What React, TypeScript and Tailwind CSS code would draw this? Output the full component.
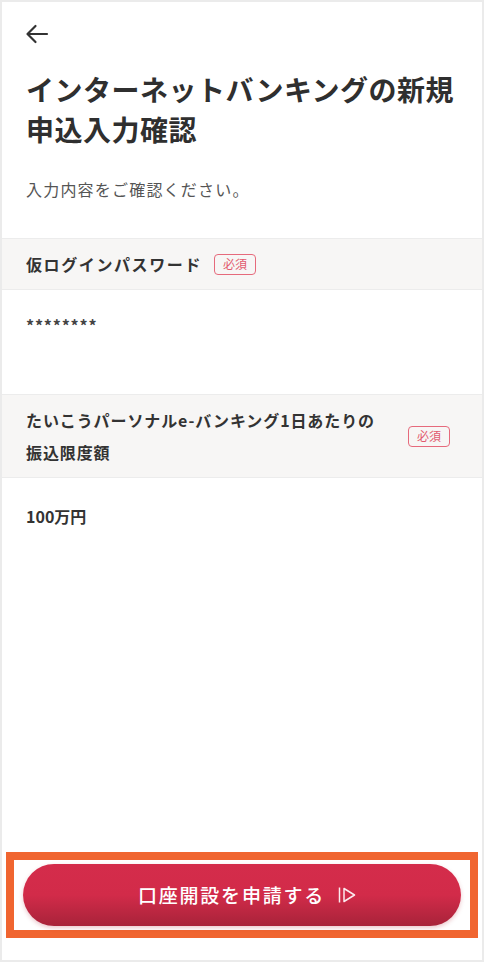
import React from "react";

const font = { fontFamily: '"Noto Sans CJK JP", "Noto Sans", sans-serif' };

function Badge() {
  return (
    <span className="inline-flex items-center justify-center h-[21px] w-[42px] rounded-[4px] border-[1.5px] border-[#e66a7c] text-[#e25a6e] text-[12px] leading-none shrink-0">
      必須
    </span>
  );
}

export default function App() {
  return (
    <div className="w-[484px] h-[962px] bg-[#ebebeb] p-[2px]" style={font}>
      <div className="w-full h-full bg-white flex flex-col text-[#333]">
        <div className="px-[22px] pt-[19px]">
          <svg width="26" height="26" viewBox="0 0 26 26" fill="none" stroke="#333" strokeWidth="2.2" strokeLinecap="round" strokeLinejoin="round">
            <path d="M23 13H4" />
            <path d="M11.5 5 3.5 13l8 8" />
          </svg>
        </div>
        <h1 className="px-[24px] mt-[22px] text-[28px] leading-[40px] font-bold tracking-[0.5px] text-[#2f2f2f]">
          インターネットバンキングの新規
          <br />
          申込入力確認
        </h1>
        <p className="px-[24px] mt-[28px] text-[16px] leading-[24px] tracking-[1.2px] text-[#555]">
          入力内容をご確認ください。
        </p>

        <div className="mt-[37px] bg-[#f7f6f5] border-y border-[#ececec] h-[52px] px-[24px] flex items-center gap-[12px]">
          <span className="text-[16px] font-bold tracking-[1.6px] text-[#333]">仮ログインパスワード</span>
          <Badge />
        </div>
        <div className="h-[104px] px-[24px] pt-[23px]">
          <span className="text-[16px] leading-[20px] font-bold tracking-[0.8px] text-[#444]">********</span>
        </div>

        <div className="bg-[#f7f6f5] border-y border-[#ececec] h-[84px] pl-[24px] pr-[32px] flex items-center justify-between">
          <span className="text-[16px] leading-[32px] font-bold tracking-[0.9px] text-[#333]">
            たいこうパーソナルe-バンキング1日あたりの
            <br />
            振込限度額
          </span>
          <Badge />
        </div>
        <div className="px-[24px] pt-[26px]">
          <span className="text-[16px] leading-[24px] font-bold text-[#333]">100万円</span>
        </div>

        <div className="flex-1" />

        <div className="mx-[4px] mb-[22px] border-[8px] border-[#f06530] px-[9px] py-[4px]">
          <button className="w-full h-[62px] rounded-full bg-gradient-to-b from-[#d42c4b] via-[#d22b49] to-[#a8233a] shadow-[0_2px_4px_rgba(180,40,60,0.25)] flex items-center justify-center gap-[13px] pl-[10px] text-white">
            <span className="text-[19px] font-medium tracking-[1.8px]">口座開設を申請する</span>
            <svg width="18" height="20" viewBox="0 0 18 20" fill="none" stroke="#fbeaee" strokeWidth="1.5" strokeLinejoin="round">
              <path d="M1.5 2.5v15" />
              <path d="M6 3.5 16.5 10 6 16.5Z" />
            </svg>
          </button>
        </div>
      </div>
    </div>
  );
}
